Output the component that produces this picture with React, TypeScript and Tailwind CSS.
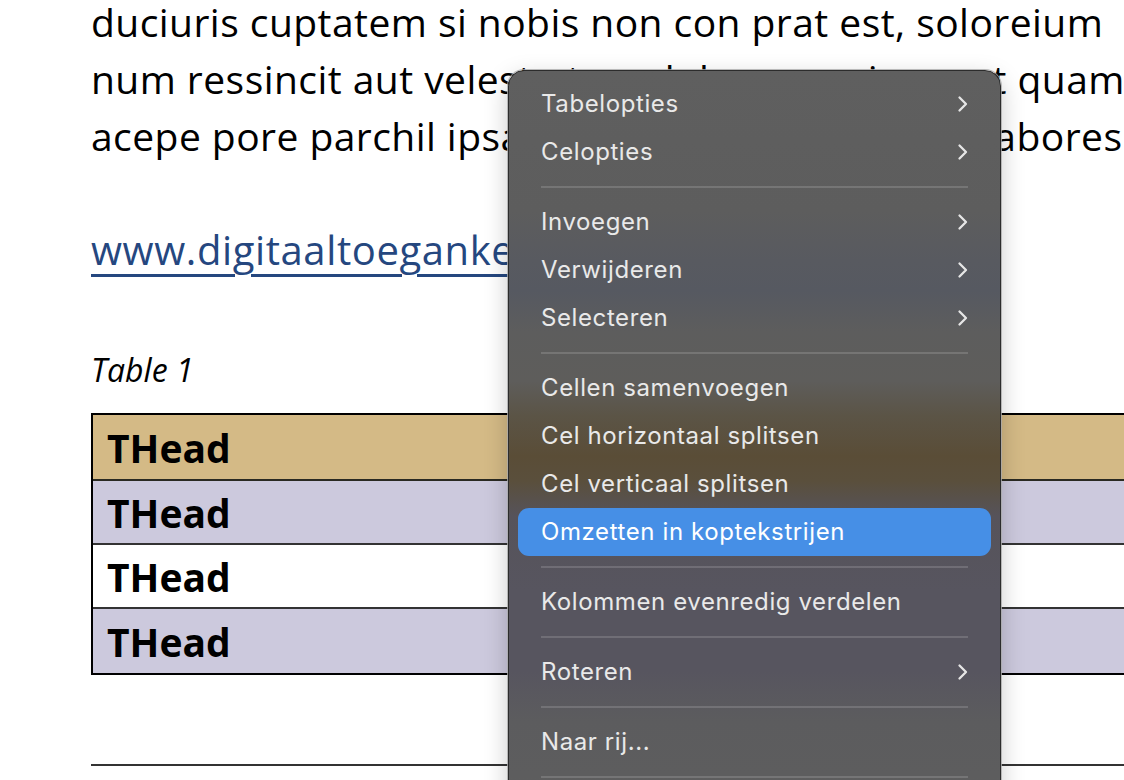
import React from "react";

type MenuEntry = { label: string; sub?: boolean; active?: boolean } | "sep";

const entries: MenuEntry[] = [
  { label: "Tabelopties", sub: true },
  { label: "Celopties", sub: true },
  "sep",
  { label: "Invoegen", sub: true },
  { label: "Verwijderen", sub: true },
  { label: "Selecteren", sub: true },
  "sep",
  { label: "Cellen samenvoegen" },
  { label: "Cel horizontaal splitsen" },
  { label: "Cel verticaal splitsen" },
  { label: "Omzetten in koptekstrijen", active: true },
  "sep",
  { label: "Kolommen evenredig verdelen" },
  "sep",
  { label: "Roteren", sub: true },
  "sep",
  { label: "Naar rij..." },
  "sep",
];

const rows = ["bg-[#d4ba86]", "bg-[#ccc9dd]", "bg-white", "bg-[#ccc9dd]"];

function Chevron() {
  return (
    <svg width="13" height="18" viewBox="0 0 13 18" fill="none">
      <path d="M3.5 2.5l6.5 6.5-6.5 6.5" stroke="#e6e6e6" strokeWidth="2.3" strokeLinecap="round" strokeLinejoin="round" />
    </svg>
  );
}

// the blurred document behind the menu is faked with a tinted gradient
function ContextMenu() {
  return (
    <div className="absolute left-[508px] top-[70px] w-[493px] h-[760px] rounded-[16px] bg-[linear-gradient(to_bottom,#5f5f5f_0px,#5d5d5d_140px,#585a60_190px,#565961_220px,#5d5d5d_260px,#5e5d5b_310px,#5b5446_345px,#5a4d37_385px,#5a4f3c_410px,#56535a_445px,#57555f_520px,#57555f_600px,#5c5c5e_650px,#5e5e5e_100%)] border border-[#2c2c2c] shadow-[0_0_0_1px_rgba(170,170,170,0.8),0_8px_24px_rgba(0,0,0,0.22)] px-[9px] pt-[9px] font-['Inter',sans-serif] text-[24px] tracking-[0.6px]">
      {entries.map((e, i) =>
        e === "sep" ? (
          <div key={i} className="h-[22px] flex items-center px-[23px]">
            <div className="h-[2px] w-full bg-white/15" />
          </div>
        ) : (
          <div
            key={i}
            className={`h-[48px] flex items-center justify-between pl-[23px] pr-[22px] rounded-[11px] ${
              e.active ? "bg-[#468fe6] text-white" : "text-[#e9e9e9]"
            }`}
          >
            <span>{e.label}</span>
            {e.sub && <Chevron />}
          </div>
        )
      )}
    </div>
  );
}

export default function App() {
  return (
    <div className="relative w-[1124px] h-[780px] overflow-hidden bg-white">
      <div className="pl-[91px] font-['Open_Sans',sans-serif] text-black">
        <div className="-mt-[7px] text-[39px] leading-[57px] tracking-[0.45px] whitespace-nowrap">
          <p>duciuris cuptatem si nobis non con prat est, soloreium</p>
          <p>num ressincit aut velesto tem dolorem qui que et quam</p>
          <p>acepe pore parchil ipsam, ut voluptae nimus ad labores</p>
        </div>
        <p className="mt-[57px] text-[40px] leading-[57px] tracking-[0.6px] text-[#25477f] underline decoration-[2.5px] underline-offset-[9px] whitespace-nowrap">
          www.digitaaltoegankelijk.nl
        </p>
        <p className="mt-[72px] text-[32px] italic leading-[40px]">Table 1</p>
        <div className="mt-[23px] w-[1100px] border-t-2 border-l-2 border-black">
          {rows.map((bg, i) => (
            <div
              key={i}
              className={`${bg} ${i === 0 || i === 3 ? "h-[66px]" : "h-[64px]"} border-b-2 ${
                i === 0 ? "border-[#2a2a22]" : i === 3 ? "border-black" : "border-[#333]"
              } flex items-center pl-[14px]`}
            >
              <span className="text-[39px] font-bold leading-none">THead</span>
            </div>
          ))}
        </div>
        <div className="mt-[89px] h-[2px] w-[1100px] bg-[#333]" />
      </div>
      <ContextMenu />
    </div>
  );
}
